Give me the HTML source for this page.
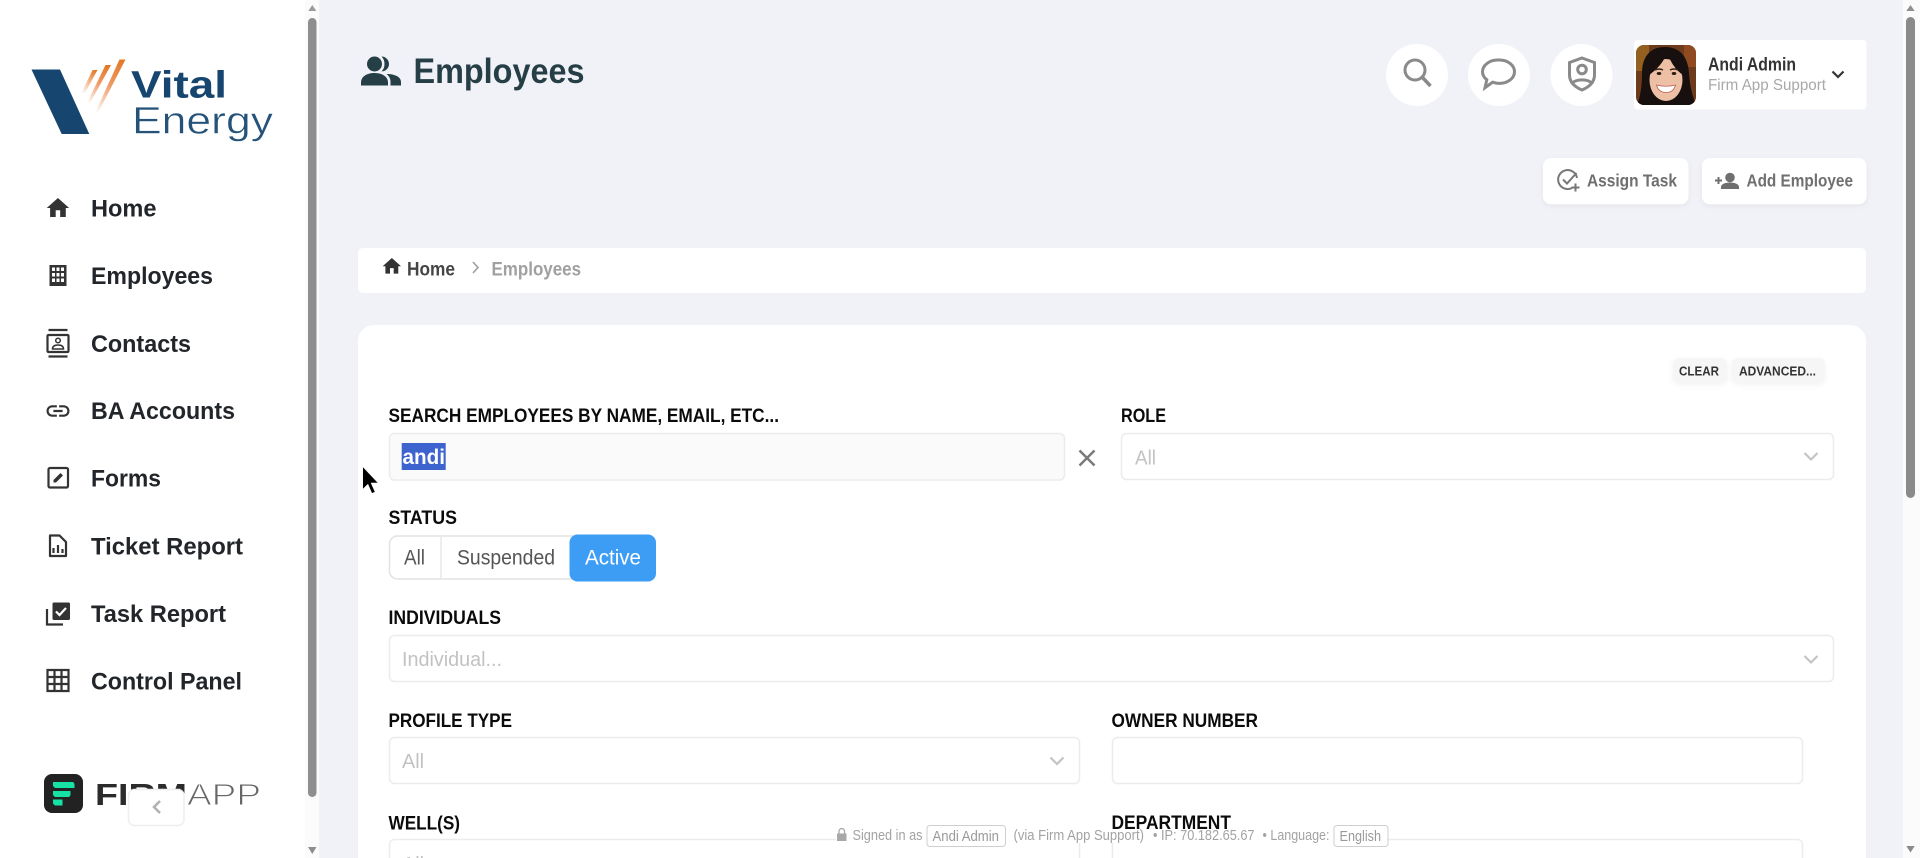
<!DOCTYPE html>
<html lang="en">
<head>
<meta charset="utf-8">
<title>Employees</title>
<style>
html,body{margin:0;padding:0;width:1920px;height:858px;overflow:hidden;background:#f1f2f7}
svg{display:block}
text{font-family:"Liberation Sans",Arial,sans-serif;white-space:pre}
.n{font-size:24.500px;font-weight:700;fill:#222529}
.l{font-size:19.500px;font-weight:700;fill:#0b0b0b}
.ph{font-size:20px;fill:#c2c2c2}
.f{font-size:14.500px;fill:#a3a3a3}
.box{fill:#fff;stroke:#ececec;stroke-width:1.500}
.ic{fill:none;stroke:#333;stroke-width:2.200}
.chev{fill:none;stroke:#c4c4c4;stroke-width:2.200}
.sh{filter:drop-shadow(0 2px 3px rgba(0,0,0,.05))}
</style>
</head>
<body>
<svg width="1920" height="858" viewBox="0 0 1920 858" xmlns="http://www.w3.org/2000/svg">
<defs>
<linearGradient id="o1" gradientUnits="userSpaceOnUse" x1="125" y1="59" x2="96" y2="113"><stop offset="0" stop-color="#e3741f"/><stop offset=".5" stop-color="#ee9c68"/><stop offset="1" stop-color="#fff"/></linearGradient>
<linearGradient id="o2" gradientUnits="userSpaceOnUse" x1="110" y1="65" x2="88" y2="103"><stop offset="0" stop-color="#e3741f"/><stop offset=".5" stop-color="#ee9c68"/><stop offset="1" stop-color="#fff"/></linearGradient>
<linearGradient id="o3" gradientUnits="userSpaceOnUse" x1="97" y1="70" x2="82" y2="94"><stop offset="0" stop-color="#e3741f"/><stop offset="1" stop-color="#fff"/></linearGradient>
<clipPath id="av"><rect x="1636" y="45" width="60" height="60" rx="8"/></clipPath>
</defs>

<!-- main background -->
<rect width="1920" height="858" fill="#f1f2f7"/>

<!-- sidebar -->
<rect x="0" y="0" width="305" height="858" fill="#fff"/>
<rect x="305" y="0" width="14" height="858" fill="#fbfbfb"/>
<rect x="308" y="18" width="8.500" height="779" rx="4.200" fill="#8e8e8e"/>
<path d="M312.300 5l4 6h-8z" fill="#9a9a9a"/>
<path d="M308 847h8.500l-4.200 7z" fill="#8e8e8e"/>

<!-- Vital Energy logo -->
<path d="M31.500 69.500H60L89.300 134H61.700z" fill="#164570"/>
<path d="M119.500 59.500h6L98 113h-3z" fill="url(#o1)"/>
<path d="M105.500 65h5.500L90 103h-3z" fill="url(#o2)"/>
<path d="M92.500 70h5L85 93h-3.500z" fill="url(#o3)"/>
<text x="131" y="97.700" font-size="38" font-weight="700" fill="#164570" textLength="96" lengthAdjust="spacingAndGlyphs">Vital</text>
<text x="132" y="133.300" font-size="38" fill="#255279" stroke="#fff" stroke-width=".5" textLength="141" lengthAdjust="spacingAndGlyphs">Energy</text>

<!-- nav -->
<path transform="translate(44.500 194.600) scale(1.12)" d="M10 20v-6h4v6h5v-8h3L12 3 2 12h3v8z" fill="#333"/>
<text class="n" x="91" y="216.700" textLength="65.500" lengthAdjust="spacingAndGlyphs">Home</text>

<path d="M49.500 265h17v21h-17z M52 267.500v3.500h3v-3.500z M56.500 267.500v3.500h3v-3.500z M61 267.500v3.500h3v-3.500z M52 273v3.500h3V273z M56.500 273v3.500h3V273z M61 273v3.500h3V273z M52 278.500v3.500h3v-3.500z M56.500 278.500v3.500h3v-3.500z M61 278.500v3.500h3v-3.500z" fill="#333" fill-rule="evenodd"/>
<text class="n" x="91" y="284" textLength="122" lengthAdjust="spacingAndGlyphs">Employees</text>

<path d="M48.500 330h19M48.500 356.500h19" stroke="#333" stroke-width="2.200" fill="none"/>
<rect x="47.500" y="335" width="21" height="17" rx="1" class="ic"/>
<circle cx="58" cy="340.500" r="2.300" fill="none" stroke="#333" stroke-width="1.500"/>
<path d="M52.500 349c0-3 2.500-4 5.500-4s5.500 1 5.500 4z" fill="none" stroke="#333" stroke-width="1.500"/>
<text class="n" x="91" y="352" textLength="100" lengthAdjust="spacingAndGlyphs">Contacts</text>

<path transform="translate(44.200 397.200) scale(1.15)" d="M3.900 12c0-1.710 1.390-3.100 3.100-3.100h4V7H7c-2.760 0-5 2.240-5 5s2.240 5 5 5h4v-1.900H7c-1.710 0-3.100-1.390-3.100-3.100zM8 13h8v-2H8v2zm9-6h-4v1.900h4c1.710 0 3.100 1.390 3.100 3.100s-1.390 3.100-3.100 3.100h-4V17h4c2.760 0 5-2.240 5-5s-2.240-5-5-5z" fill="#333"/>
<text class="n" x="91" y="419" textLength="144" lengthAdjust="spacingAndGlyphs">BA Accounts</text>

<rect x="48.500" y="468" width="19.500" height="19.500" rx="1.500" class="ic"/>
<path d="M53.500 482.500v-2.500l7-7 2.500 2.500-7 7z" fill="#333"/>
<text class="n" x="91" y="486.700" textLength="70" lengthAdjust="spacingAndGlyphs">Forms</text>

<path d="M50 535.500h9.500l6.500 6.500v14h-16z" class="ic" stroke-linejoin="round"/>
<path d="M53.500 553v-5M58 553v-8M62.500 553v-4" stroke="#333" stroke-width="2.200" fill="none"/>
<text class="n" x="91" y="554.700" textLength="152" lengthAdjust="spacingAndGlyphs">Ticket Report</text>

<path d="M47 609v15.500h16" class="ic"/>
<rect x="52.500" y="602.500" width="17.500" height="17.500" rx="1.500" fill="#333"/>
<path d="M56 611.500l3.500 3.500 6.500-7" fill="none" stroke="#fff" stroke-width="2.200"/>
<text class="n" x="91" y="622" textLength="135" lengthAdjust="spacingAndGlyphs">Task Report</text>

<path d="M47.500 670h21v21h-21zM54.500 670v21M61.500 670v21M47.500 677h21M47.500 684h21" class="ic"/>
<text class="n" x="91" y="689.700" textLength="151" lengthAdjust="spacingAndGlyphs">Control Panel</text>

<!-- FirmApp logo -->
<rect x="44" y="774" width="39" height="39" rx="8" fill="#222"/>
<path d="M53 782h19c1.500 0 2.500 1 2.500 3v3H55l-2-2zM53 791h17.500v3c0 2-1 3-2.500 3H55l-2-2zM53 799.500h9.500v6H55l-2-2z" fill="#16e2a6"/>
<text x="95" y="805" font-size="31" font-weight="700" fill="#2b2b2b" textLength="92" lengthAdjust="spacingAndGlyphs">FIRM</text>
<text x="187" y="805" font-size="31" fill="#666" stroke="#fff" stroke-width="1" textLength="74" lengthAdjust="spacingAndGlyphs">APP</text>
<rect x="128.500" y="789.500" width="55.500" height="36" rx="6" fill="#fff" stroke="#eee" stroke-width="1.500"/>
<path d="M160 801l-6 6 6 6" fill="none" stroke="#b0b0b0" stroke-width="2.500"/>

<!-- page title -->
<circle cx="374.500" cy="64" r="7.500" fill="#263f47"/>
<path d="M381.500 56.500a7.500 7.500 0 0 1 0 15c2-2 3-4.500 3-7.500s-1-5.500-3-7.500z" fill="#263f47"/>
<path d="M361 85.500v-3c0-6 6-9.500 13.500-9.500s13.500 3.500 13.500 9.500v3z" fill="#263f47"/>
<path d="M390.500 85.500v-4c0-3-1.500-5.500-4-7.500 8.500 0 14.500 3 14.500 8v3.500z" fill="#263f47"/>
<text x="413.500" y="83" font-size="35" font-weight="700" fill="#263f47" textLength="171" lengthAdjust="spacingAndGlyphs">Employees</text>

<!-- header actions -->
<circle cx="1417" cy="75" r="31" fill="#fff"/>
<circle cx="1499" cy="75" r="31" fill="#fff"/>
<circle cx="1581.500" cy="75" r="31" fill="#fff"/>
<circle cx="1415" cy="70" r="10" fill="none" stroke="#8a8a8a" stroke-width="3"/>
<path d="M1422.500 77.500l8 8.500" stroke="#8a8a8a" stroke-width="3.500" fill="none"/>
<path d="M1499.500 60c8.300 0 15 5.200 15 11.700s-6.700 11.700-15 11.700c-2.500 0-4.800-.5-6.800-1.200l-7.700 5.500 1.800-8c-2.800-2.200-4.300-5-4.300-8 0-6.500 7-11.700 15-11.700z" fill="none" stroke="#8a8a8a" stroke-width="3"/>
<path d="M1582 58l12.500 4.500v12.500c0 7.500-5.500 12-12.500 15-7-3-12.500-7.500-12.500-15V62.500z" fill="none" stroke="#8a8a8a" stroke-width="3"/>
<circle cx="1582" cy="69.500" r="4.300" fill="none" stroke="#8a8a8a" stroke-width="3"/>
<path d="M1571.500 84c3.500-5.500 17.500-5.500 21 0" fill="none" stroke="#8a8a8a" stroke-width="3"/>

<rect x="1634" y="40" width="232.500" height="69.500" rx="4" fill="#fff"/>
<g clip-path="url(#av)">
<rect x="1636" y="45" width="60" height="60" fill="#6d3a1c"/>
<path d="M1636 45h13v26h-13z" fill="#93601f"/>
<path d="M1684 45h12v22h-12z" fill="#8f4a22"/>
<path d="M1665 47c-16 0-23 11-23 26s-2 24-5 32h59c-3-8-6-17-7-32s-8-26-24-26z" fill="#17100e"/>
<ellipse cx="1666" cy="80" rx="16.500" ry="21" fill="#edbfa5"/>
<path d="M1649 75c0-12 9-17 16-18-3 7-9 13-16 18zM1683 75c0-10-7-16-14-18 3 7 7 13 14 18z" fill="#17100e"/>
<path d="M1655 70q4-2 8 0M1670 70q4-2 8 0" stroke="#3a2418" stroke-width="1.500" fill="none"/>
<ellipse cx="1659" cy="73.500" rx="2.300" ry="1.500" fill="#2a1810"/>
<ellipse cx="1674" cy="73.500" rx="2.300" ry="1.500" fill="#2a1810"/>
<path d="M1656.500 85q9.500 2.500 19 0q-2 7.500-9.500 7.500t-9.500-7.500z" fill="#fff" stroke="#c0605a" stroke-width=".8"/>
</g>
<text x="1708" y="70.700" font-size="18" font-weight="700" fill="#333" textLength="88" lengthAdjust="spacingAndGlyphs">Andi Admin</text>
<text x="1708" y="90" font-size="16" fill="#a8a8a8" textLength="118" lengthAdjust="spacingAndGlyphs">Firm App Support</text>
<path d="M1832.500 71.500l5.500 5.500 5.500-5.500" fill="none" stroke="#333" stroke-width="2.200"/>

<!-- action buttons -->
<rect class="sh" x="1543" y="158" width="145.500" height="46.300" rx="8" fill="#fff"/>
<rect class="sh" x="1702" y="158" width="164.500" height="46.300" rx="8" fill="#fff"/>
<path d="M1577 178a9.500 9.500 0 1 0-5 10" fill="none" stroke="#777" stroke-width="2"/>
<path d="M1563 179.500l4 4 9.500-10.500" fill="none" stroke="#777" stroke-width="2"/>
<path d="M1575.500 183.500v8M1571.500 187.500h8" stroke="#777" stroke-width="2" fill="none"/>
<text x="1587" y="186.700" font-size="17.500" font-weight="700" fill="#6f6f6f" textLength="90" lengthAdjust="spacingAndGlyphs">Assign Task</text>
<path d="M1715 180.500h7M1718.500 177v7" stroke="#6f6f6f" stroke-width="2" fill="none"/>
<circle cx="1730" cy="177.500" r="4.800" fill="#6f6f6f"/>
<path d="M1721 189v-2c0-3 4.500-4.500 9-4.500s9 1.500 9 4.500v2z" fill="#6f6f6f"/>
<text x="1746.500" y="186.700" font-size="17.500" font-weight="700" fill="#6f6f6f" textLength="106.500" lengthAdjust="spacingAndGlyphs">Add Employee</text>

<!-- breadcrumb -->
<rect x="358" y="248" width="1508" height="45" rx="5" fill="#fff"/>
<path transform="translate(380.800 255.200) scale(.92)" d="M10 20v-6h4v6h5v-8h3L12 3 2 12h3v8z" fill="#333"/>
<text x="407" y="275.300" font-size="19" font-weight="700" fill="#454545" textLength="48" lengthAdjust="spacingAndGlyphs">Home</text>
<path d="M473 262l5 5.500-5 5.500" fill="none" stroke="#999" stroke-width="1.500"/>
<text x="491.500" y="275.300" font-size="19" font-weight="700" fill="#a0a0a0" textLength="89.500" lengthAdjust="spacingAndGlyphs">Employees</text>

<!-- main card -->
<rect x="358" y="325" width="1508" height="560" rx="16" fill="#fff"/>

<rect class="sh" x="1673" y="358" width="54" height="24.500" rx="6" fill="#f6f6f6"/>
<rect class="sh" x="1732" y="358" width="93" height="24.500" rx="6" fill="#f6f6f6"/>
<text x="1679" y="375.700" font-size="12.500" font-weight="700" fill="#333" textLength="40" lengthAdjust="spacingAndGlyphs">CLEAR</text>
<text x="1739" y="375.700" font-size="12.500" font-weight="700" fill="#333" textLength="77" lengthAdjust="spacingAndGlyphs">ADVANCED...</text>

<!-- search -->
<text class="l" x="388.500" y="422" textLength="390.500" lengthAdjust="spacingAndGlyphs">SEARCH EMPLOYEES BY NAME, EMAIL, ETC...</text>
<rect x="389.500" y="433.500" width="675" height="46.500" rx="5" fill="#fafafa" stroke="#ececec" stroke-width="1.500"/>
<rect x="401.700" y="443" width="44" height="27" fill="#3d63cf"/>
<text x="402.500" y="464" font-size="21" font-weight="700" fill="#fff" textLength="42.500" lengthAdjust="spacingAndGlyphs">andi</text>
<path d="M1079.500 450.500l15 15M1094.500 450.500l-15 15" stroke="#7a7a7a" stroke-width="2.500" fill="none"/>

<text class="l" x="1121" y="422" textLength="45" lengthAdjust="spacingAndGlyphs">ROLE</text>
<rect class="box" x="1121.500" y="433.500" width="712" height="46" rx="5"/>
<text class="ph" x="1135" y="464.500" textLength="21" lengthAdjust="spacingAndGlyphs">All</text>
<path class="chev" d="M1804.500 453l6.500 6.500 6.500-6.500"/>

<!-- status -->
<text class="l" x="388.500" y="524" textLength="68.500" lengthAdjust="spacingAndGlyphs">STATUS</text>
<rect x="389.500" y="536" width="200" height="43" rx="8" fill="#fff" stroke="#e2e2e2" stroke-width="1.500"/>
<path d="M441 536v43" stroke="#e9e9e9" stroke-width="1.500"/>
<text x="404" y="564.300" font-size="21" fill="#555" textLength="21" lengthAdjust="spacingAndGlyphs">All</text>
<text x="457" y="564.300" font-size="21" fill="#555" textLength="98" lengthAdjust="spacingAndGlyphs">Suspended</text>
<rect x="569.500" y="534.500" width="86.500" height="47" rx="8" fill="#3d9df5"/>
<text x="585" y="564.300" font-size="21" fill="#fff" textLength="56" lengthAdjust="spacingAndGlyphs">Active</text>

<!-- individuals -->
<text class="l" x="388.500" y="624" textLength="112.500" lengthAdjust="spacingAndGlyphs">INDIVIDUALS</text>
<rect class="box" x="389.500" y="635.500" width="1444" height="46" rx="5"/>
<text class="ph" x="402" y="666" textLength="100" lengthAdjust="spacingAndGlyphs">Individual...</text>
<path class="chev" d="M1804.500 656l6.500 6.500 6.500-6.500"/>

<!-- profile type / owner number -->
<text class="l" x="388.500" y="727" textLength="123.500" lengthAdjust="spacingAndGlyphs">PROFILE TYPE</text>
<rect class="box" x="389.500" y="737.500" width="690" height="46" rx="5"/>
<text class="ph" x="402" y="768" textLength="22" lengthAdjust="spacingAndGlyphs">All</text>
<path class="chev" d="M1050.500 757.500l6.500 6.500 6.500-6.500"/>
<text class="l" x="1111.500" y="727" textLength="146.500" lengthAdjust="spacingAndGlyphs">OWNER NUMBER</text>
<rect class="box" x="1112.500" y="737.500" width="690" height="46" rx="5"/>

<!-- wells / department -->
<text class="l" x="388.500" y="829.500" textLength="71.500" lengthAdjust="spacingAndGlyphs">WELL(S)</text>
<rect class="box" x="389.500" y="839.500" width="690" height="46" rx="5"/>
<text class="ph" x="402" y="871" textLength="22" lengthAdjust="spacingAndGlyphs">All</text>
<text class="l" x="1111.500" y="829" textLength="119.500" lengthAdjust="spacingAndGlyphs">DEPARTMENT</text>
<rect class="box" x="1112.500" y="839.500" width="690" height="46" rx="5"/>

<!-- footer overlay -->
<rect x="836" y="836" width="552" height="7" fill="#fff"/>
<path d="M837 833.500h9.500v7.500h-9.500z" fill="#a8a8a8"/>
<path d="M839 833.500v-2.200a2.700 2.700 0 0 1 5.500 0v2.200" fill="none" stroke="#a8a8a8" stroke-width="1.300"/>
<text class="f" x="852.500" y="840" textLength="70" lengthAdjust="spacingAndGlyphs">Signed in as</text>
<rect x="927" y="825.500" width="78.500" height="21" rx="3" fill="#fff" fill-opacity=".6" stroke="#cfcfcf"/>
<text class="f" x="932.500" y="841" textLength="66.500" lengthAdjust="spacingAndGlyphs" style="fill:#9a9a9a">Andi Admin</text>
<text class="f" x="1013.500" y="840" textLength="130.500" lengthAdjust="spacingAndGlyphs">(via Firm App Support)</text>
<text class="f" x="1153" y="840" textLength="101.500" lengthAdjust="spacingAndGlyphs">• IP: 70.182.65.67</text>
<text class="f" x="1262.500" y="840" textLength="67" lengthAdjust="spacingAndGlyphs">• Language:</text>
<rect x="1334" y="825.500" width="54" height="21" rx="3" fill="#fff" fill-opacity=".6" stroke="#cfcfcf"/>
<text class="f" x="1339.500" y="841" textLength="41.500" lengthAdjust="spacingAndGlyphs" style="fill:#9a9a9a">English</text>

<!-- cursor -->
<path d="M362.700 466.700v22.500l5.200-5 4 9.200 3.200-1.400-4-9h7z" fill="#000" stroke="#fff" stroke-width=".5"/>

<!-- page scrollbar -->
<rect x="1903" y="0" width="17" height="858" fill="#fbfbfb"/>
<rect x="1906" y="17" width="9" height="481" rx="4.500" fill="#8a8a8a"/>
<path d="M1910.500 5l4.200 6h-8.400z" fill="#8f8f8f"/>
<path d="M1906.300 846h8.400l-4.200 6.500z" fill="#8a8a8a"/>
</svg>
</body>
</html>
